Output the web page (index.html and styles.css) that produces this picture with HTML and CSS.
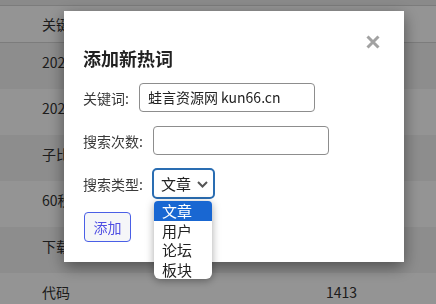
FILE: index.html
```html
<!DOCTYPE html>
<html lang="zh-CN">
<head>
<meta charset="utf-8">
<title>添加新热词</title>
<link rel="stylesheet" href="styles.css">
</head>
<body>
<div class="page">
  <div class="top-band"></div>
  <div class="table">
    <div class="row head"><span>关键词</span><span>搜索次数</span></div>
    <div class="row odd"><span>2024</span><span>2310</span></div>
    <div class="row"><span>2023</span><span>1987</span></div>
    <div class="row odd"><span>子比</span><span>1750</span></div>
    <div class="row"><span>60秒</span><span>1602</span></div>
    <div class="row odd"><span>下载</span><span>1533</span></div>
    <div class="row"><span>代码</span><span>1413</span></div>
  </div>
</div>

<div class="overlay">
  <div class="modal">
    <div class="modal-head">
      <h2 class="title">添加新热词</h2>
      <span class="close" aria-label="关闭">
        <svg width="14" height="14" viewBox="0 0 14 14"><path d="M1.5 1.5 L12.5 12.5 M12.5 1.5 L1.5 12.5" stroke="#a2a2a2" stroke-width="3" stroke-linecap="butt" fill="none"/></svg>
      </span>
    </div>
    <div class="field f1">
      <label class="label">关键词:</label>
      <div class="input">蛙言资源网 kun66.cn</div>
    </div>
    <div class="field f2">
      <label class="label">搜索次数:</label>
      <div class="input"></div>
    </div>
    <div class="field f3">
      <label class="label">搜索类型:</label>
      <div class="select-wrap">
        <div class="select">
          <span>文章</span>
          <svg class="chev" width="11" height="7" viewBox="0 0 11 7"><path d="M1 1 L5.5 5.5 L10 1" stroke="#555" stroke-width="2" fill="none"/></svg>
        </div>
        <ul class="dropdown">
          <li class="opt selected">文章</li>
          <li class="opt">用户</li>
          <li class="opt">论坛</li>
          <li class="opt">板块</li>
        </ul>
      </div>
    </div>
    <button class="btn">添加</button>
  </div>
</div>
</body>
</html>
```

FILE: styles.css
```css
* { box-sizing: border-box; }
html, body {
  margin: 0;
  padding: 0;
  width: 436px;
  height: 304px;
  overflow: hidden;
  background: #fff;
  font-family: "Noto Sans CJK SC", "Noto Sans", sans-serif;
  color: #333;
}
.page { width: 436px; }
.top-band {
  height: 6px;
  background: #eeeeee;
  border-bottom: 1px solid #d6d6d6;
}
.table { display: flex; flex-direction: column; }
.row {
  display: grid;
  grid-template-columns: 284px 1fr;
  align-items: start;
  height: 46px;
  padding: 9px 0 0 42px;
  font-size: 14px;
  line-height: 20px;
  color: #333;
  white-space: nowrap;
}
.row.head {
  height: 37px;
  align-items: center;
  padding-top: 0;
  background: #fff;
  border-bottom: 1px solid #d6d6d6;
}
.row.odd { background: #f3f3f3; }

.overlay {
  position: fixed;
  inset: 0;
  background: rgba(0, 0, 0, 0.42);
}
.modal {
  position: absolute;
  left: 64px;
  top: 11px;
  width: 340px;
  height: 251px;
  background: #fff;
  box-shadow: 0 5px 15px rgba(0, 0, 0, 0.45);
  padding: 24px 24px 20px 19px;
  display: flex;
  flex-direction: column;
  align-items: flex-start;
}
.modal-head {
  display: flex;
  justify-content: space-between;
  align-items: flex-start;
  width: 100%;
}
.title {
  margin: 10px 0 0 0;
  font-size: 18px;
  line-height: 26px;
  font-weight: 700;
  color: #222;
}
.close { display: block; width: 14px; height: 14px; }
.close svg { display: block; }

.field {
  display: flex;
  align-items: center;
}
.f1 { margin-top: 12px; }
.f2 { margin-top: 14px; }
.f3 { margin-top: 13px; }
.label {
  font-size: 14px;
  line-height: 20px;
  color: #3a3a3a;
  margin-right: 10px;
}
.f1 .label { margin-right: 10px; }
.input {
  width: 176px;
  height: 29px;
  border: 1px solid #8d8d8d;
  border-radius: 4px;
  padding: 0 8px;
  font-size: 14px;
  line-height: 27px;
  color: #222;
}
.select-wrap { position: relative; margin-left: -1px; }
.select {
  display: flex;
  align-items: center;
  gap: 6px;
  width: 63px;
  height: 31px;
  border: 2px solid #2a6db2;
  border-radius: 5px;
  padding-left: 7px;
  font-size: 15px;
  color: #222;
}
.chev { display: block; margin-top: 1px; }
.dropdown {
  position: absolute;
  left: 2px;
  top: 33px;
  width: 58px;
  margin: 0;
  padding: 0;
  list-style: none;
  background: #fff;
  border-radius: 4px 4px 6px 6px;
  box-shadow: 0 2px 8px rgba(0, 0, 0, 0.35);
  overflow: hidden;
}
.opt {
  height: 19.5px;
  line-height: 19.5px;
  padding-left: 8px;
  font-size: 15px;
  color: #222;
}
.opt.selected {
  background: #1967d2;
  color: #fff;
}
.btn {
  margin-top: 13px;
  margin-left: 1px;
  height: 30px;
  width: 47px;
  padding: 0;
  border: 1px solid #4a5fe6;
  border-radius: 4px;
  background: #f5f6f8;
  color: #4f4fe3;
  font-family: "Noto Sans CJK SC", sans-serif;
  font-size: 14px;
}
```
